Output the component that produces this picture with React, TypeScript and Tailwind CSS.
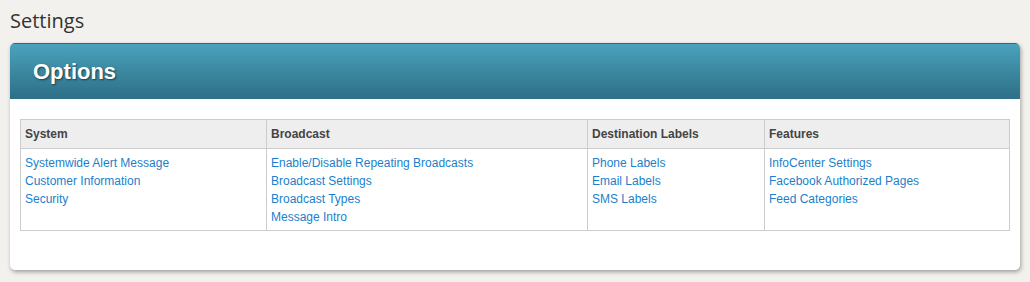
import React from 'react';

type Column = {
  title: string;
  width: string;
  links: string[];
};

const columns: Column[] = [
  { title: 'System', width: 'w-[246px]', links: ['Systemwide Alert Message', 'Customer Information', 'Security'] },
  {
    title: 'Broadcast',
    width: 'w-[321px]',
    links: ['Enable/Disable Repeating Broadcasts', 'Broadcast Settings', 'Broadcast Types', 'Message Intro'],
  },
  { title: 'Destination Labels', width: 'w-[177px]', links: ['Phone Labels', 'Email Labels', 'SMS Labels'] },
  { title: 'Features', width: 'w-[245px]', links: ['InfoCenter Settings', 'Facebook Authorized Pages', 'Feed Categories'] },
];

export default function App() {
  return (
    <div className="w-[1030px] h-[282px] bg-[#f3f1ed] overflow-hidden font-['Liberation_Sans',Arial,sans-serif]">
      <h1 className="pl-[10px] pt-[8px] h-[43px] text-[20px] leading-[26px] text-[#333] font-['Open_Sans',sans-serif]">
        Settings
      </h1>

      <div className="mx-[10px] h-[227px] bg-white rounded-[5px] shadow-[1px_2px_4px_rgba(0,0,0,0.35)] overflow-hidden">
        <div className="h-[56px] flex items-center pl-[23px] border-t border-[#2b6a80] bg-gradient-to-b from-[#4aa2bc] to-[#2d6f86]">
          <h2 className="text-[22px] font-bold text-white [text-shadow:1px_1px_2px_rgba(0,0,0,0.55)]">Options</h2>
        </div>

        <div className="pt-[20px] px-[10px]">
          <table className="border-collapse text-[12px]">
            <thead>
              <tr>
                {columns.map((col) => (
                  <th
                    key={col.title}
                    className={`${col.width} h-[29px] border border-[#cccccc] bg-[#eeeeee] pl-[4px] pr-[5px] text-left font-bold text-[#444]`}
                  >
                    {col.title}
                  </th>
                ))}
              </tr>
            </thead>
            <tbody>
              <tr>
                {columns.map((col) => (
                  <td key={col.title} className="align-top border border-[#cccccc] pl-[4px] pr-[5px] pt-[5px] pb-[4px] h-[82px]">
                    {col.links.map((link) => (
                      <a key={link} href="#" className="block leading-[18px] text-[#1b7fcc]">
                        {link}
                      </a>
                    ))}
                  </td>
                ))}
              </tr>
            </tbody>
          </table>
        </div>
      </div>
    </div>
  );
}
